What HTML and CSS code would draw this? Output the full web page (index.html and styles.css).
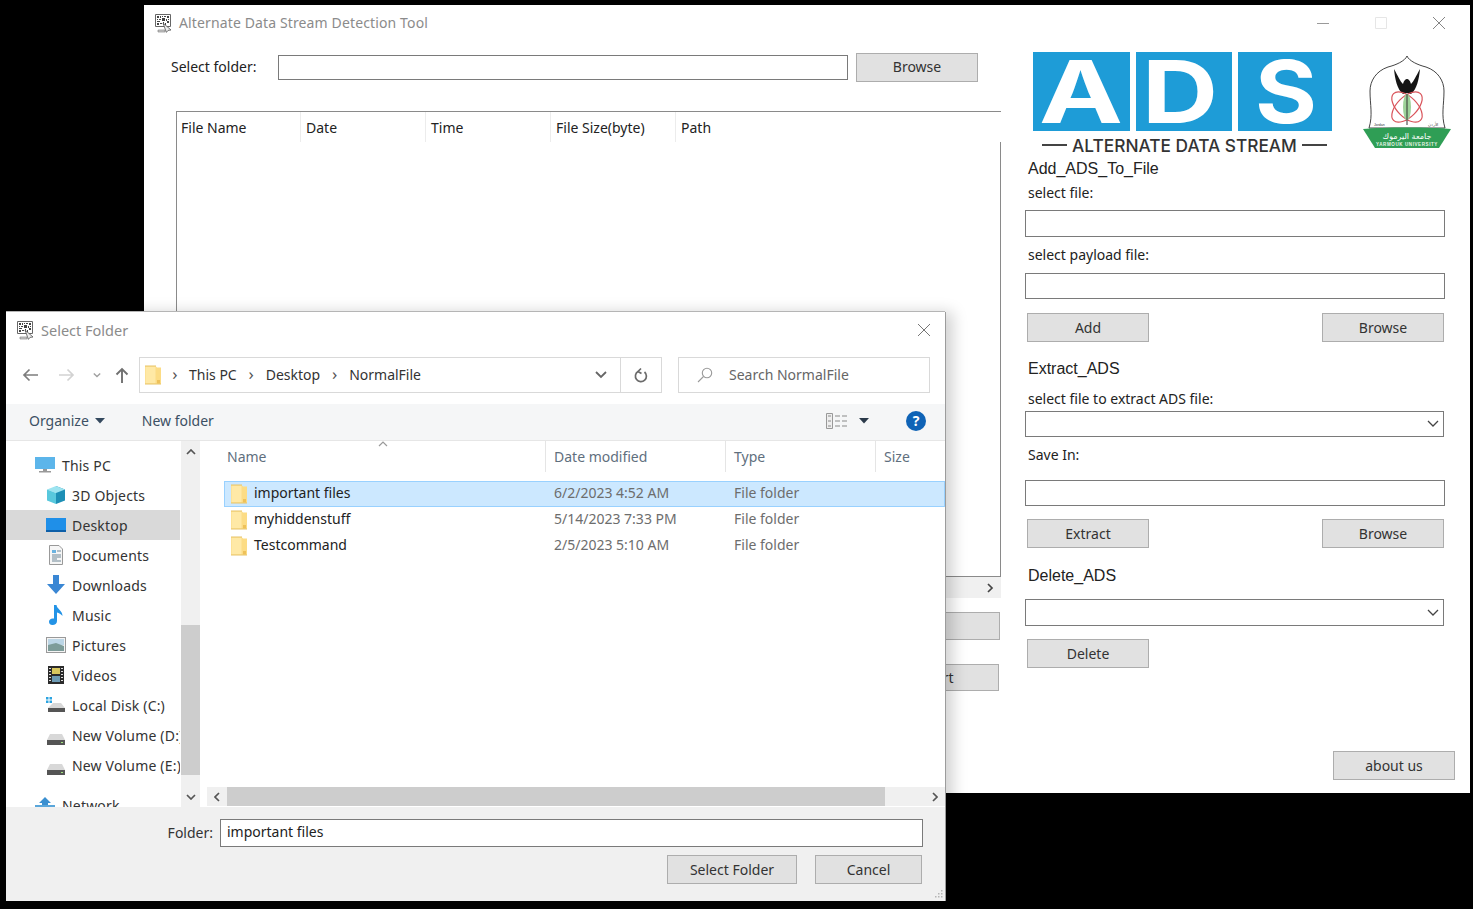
FILE: index.html
```html
<!DOCTYPE html>
<html lang="en">
<head>
<meta charset="utf-8">
<title>Alternate Data Stream Detection Tool</title>
<link rel="stylesheet" href="styles.css">
</head>
<body>
<svg class="defs" width="0" height="0">
  <defs>
    <symbol id="app" viewBox="0 0 20 20">
      <path d="M1.500 1.500h15v12h-15z" fill="#fff" stroke="#666" stroke-width="1"/>
      <path d="M3 3h2v2H3zM6 3h1v2H6zM8 3h1v1H8zM10 3h2v1h-2zM13 3h2v2h-2zM3 6h1v1H3zM5 6h2v1H5zM8 5h3v3H8zM12 6h1v2h-1zM14 6h1v1h-1zM3 8h3v1H3zM13 8h2v2h-2zM3 10h2v2H3zM6 10h2v1H6zM9 9h1v3H9zM11 10h1v2h-1z" fill="#444"/>
      <path d="M9 10l8 7-3 .4-1.600 2L9 10z" fill="#eee" stroke="#555" stroke-width=".8"/>
      <path d="M4 17h7v2H4z" fill="#ccc" stroke="#777" stroke-width=".6"/>
    </symbol>
    <symbol id="folder" viewBox="0 0 16 20">
      <path d="M0 1h10.500l1.500 1.500H16V19H0z" fill="#fcdc85"/>
      <path d="M.5 1.500h10v17H.5z" fill="#ffe9a6"/>
      <path d="M12 15h3v3.500h-3z" fill="#eec15a"/>
      <path d="M0 .5h11v1H0zM0 18.500h16v1H0z" fill="#e8c468"/>
    </symbol>
    <symbol id="drive" viewBox="0 0 20 14">
      <path d="M4 2h12l3 6H1z" fill="#d8d8d8"/>
      <path d="M1 8h18v5H1z" fill="#555"/>
      <path d="M15 10h2v1h-2z" fill="#9fe27a"/>
    </symbol>
  </defs>
</svg>

<main class="win-main">
  <header class="titlebar">
    <svg class="app-icon"><use href="#app"/></svg>
    <span class="title-text">Alternate Data Stream Detection Tool</span>
    <div class="win-buttons">
      <svg class="wb" viewBox="0 0 12 12"><path d="M0 6.500h12" stroke="#9a9a9a"/></svg>
      <svg class="wb" viewBox="0 0 12 12"><path d="M.5.500h11v11H.5z" fill="none" stroke="#e6e6e6"/></svg>
      <svg class="wb" viewBox="0 0 12 12"><path d="M0 0l12 12M12 0L0 12" stroke="#777" stroke-width=".9"/></svg>
    </div>
  </header>
  <div class="main-body">
    <section class="left-col">
      <div class="folder-row">
        <label class="ui folder-label">Select folder:</label>
        <div class="field folder-input"></div>
        <button class="btn folder-browse">Browse</button>
      </div>
      <div class="results">
        <div class="results-head">
          <span>File Name</span><span>Date</span><span>Time</span><span>File Size(byte)</span><span>Path</span>
        </div>
        <div class="results-body"></div>
      </div>
      <div class="results-scroll">
        <svg class="chev" viewBox="0 0 10 10"><path d="M3 1l4 4-4 4" fill="none" stroke="#444" stroke-width="1.700"/></svg>
      </div>
      <button class="btn left-btn first"></button>
      <button class="btn left-btn second">Export</button>
    </section>

    <section class="right-col">
      <div class="logos">
        <div class="ads-logo">
          <svg class="ads-tiles" viewBox="0 0 299 79">
            <rect width="97" height="79" fill="#1e9cd7"/>
            <rect x="103" width="96" height="79" fill="#1e9cd7"/>
            <rect x="205" width="94" height="79" fill="#1e9cd7"/>
            <g class="ads-letters">
              <text x="6" y="71" textLength="84" lengthAdjust="spacingAndGlyphs">A</text>
              <text x="109" y="71" textLength="76" lengthAdjust="spacingAndGlyphs">D</text>
              <text x="222" y="71" textLength="62" lengthAdjust="spacingAndGlyphs">S</text>
            </g>
          </svg>
          <div class="ads-caption"><i></i><span>ALTERNATE DATA STREAM</span><i></i></div>
        </div>
        <svg class="crest" viewBox="0 0 90 95">
          <path d="M45 1C43 6 34 10 26 12 14 16 8 26 8 36 8 50 11 60 7 73H83C79 60 82 50 82 36 82 26 76 16 64 12 56 10 47 6 45 1z" fill="#fff" stroke="#444" stroke-width="1"/>
          <path d="M32 14C33 24 35 34 41 39L45 38 49 39C55 34 57 24 58 14 54 21 52 26 49 29 48 25 46 24 45 24 44 24 42 25 41 29 38 26 36 21 32 14z" fill="#151515"/>
          <ellipse cx="45" cy="52" rx="19" ry="10" fill="none" stroke="#d9535a" stroke-width="1.200" transform="rotate(45 45 52)"/>
          <ellipse cx="45" cy="52" rx="19" ry="10" fill="none" stroke="#d9535a" stroke-width="1.200" transform="rotate(-45 45 52)"/>
          <ellipse cx="45" cy="52" rx="4" ry="13" fill="#9ed29a"/>
          <path d="M45 39v31" stroke="#333" stroke-width="1"/>
          <text class="crest-small" x="12" y="71">Jordan</text>
          <text class="crest-small" x="66" y="71">الأردن</text>
          <path d="M1 74C20 72 70 72 89 74L77 93H13z" fill="#2f9e55"/>
          <text class="crest-ar" x="45" y="84">جامعة اليرموك</text>
          <text class="crest-en" x="45" y="91">YARMOUK UNIVERSITY</text>
        </svg>
      </div>

      <h2 class="heading h-add">Add_ADS_To_File</h2>
      <label class="ui lbl l-file">select file:</label>
      <div class="field wide f-file"></div>
      <label class="ui lbl l-payload">select payload file:</label>
      <div class="field wide f-payload"></div>
      <div class="btn-row r-add"><button class="btn">Add</button><button class="btn">Browse</button></div>

      <h2 class="heading h-extract">Extract_ADS</h2>
      <label class="ui lbl l-extract">select file to extract ADS file:</label>
      <div class="field combo c-extract"><svg viewBox="0 0 12 8"><path d="M1 1l5 5 5-5" fill="none" stroke="#444" stroke-width="1.300"/></svg></div>
      <label class="ui lbl l-save">Save In:</label>
      <div class="field wide f-save"></div>
      <div class="btn-row r-extract"><button class="btn">Extract</button><button class="btn">Browse</button></div>

      <h2 class="heading h-delete">Delete_ADS</h2>
      <div class="field combo c-delete"><svg viewBox="0 0 12 8"><path d="M1 1l5 5 5-5" fill="none" stroke="#444" stroke-width="1.300"/></svg></div>
      <button class="btn b-delete">Delete</button>
      <button class="btn b-about">about us</button>
    </section>
  </div>
</main>

<div class="dialog">
  <header class="dlg-title">
    <svg class="app-icon"><use href="#app"/></svg>
    <span class="title-text small">Select Folder</span>
    <svg class="dlg-close" viewBox="0 0 12 12"><path d="M0 0l12 12M12 0L0 12" stroke="#666" stroke-width=".9"/></svg>
  </header>

  <div class="nav-row">
    <svg class="nav-ic back" viewBox="0 0 16 14"><path d="M16 7H2M7.500 1.500L2 7l5.500 5.500" fill="none" stroke="#7d7d7d" stroke-width="1.700"/></svg>
    <svg class="nav-ic fwd" viewBox="0 0 16 14"><path d="M0 7h14M8.500 1.500L14 7l-5.500 5.500" fill="none" stroke="#d2d2d2" stroke-width="1.700"/></svg>
    <svg class="nav-ic drop" viewBox="0 0 10 6"><path d="M1 1l4 4 4-4" fill="none" stroke="#a0a0a0" stroke-width="1.700"/></svg>
    <svg class="nav-ic up" viewBox="0 0 14 16"><path d="M7 16V2M1.500 7.500L7 2l5.500 5.500" fill="none" stroke="#707070" stroke-width="1.900"/></svg>
    <div class="crumbs">
      <svg class="crumb-folder"><use href="#folder"/></svg>
      <span class="sep first">›</span><span>This PC</span>
      <span class="sep">›</span><span>Desktop</span>
      <span class="sep">›</span><span>NormalFile</span>
      <svg class="crumb-drop" viewBox="0 0 12 8"><path d="M1 1l5 5 5-5" fill="none" stroke="#666" stroke-width="1.800"/></svg>
      <div class="crumb-refresh">
        <svg viewBox="0 0 14 16"><path d="M4 4.500A5.500 5.500 0 1 0 10.500 5M7 1.500L4 4.500l3.500 2" fill="none" stroke="#6a6a6a" stroke-width="1.700"/></svg>
      </div>
    </div>
    <div class="search">
      <svg viewBox="0 0 16 16"><circle cx="10" cy="6" r="4.700" fill="none" stroke="#9a9a9a" stroke-width="1.100"/><path d="M6.500 9.500L1 15" stroke="#9a9a9a" stroke-width="1.100"/></svg>
      <span>Search NormalFile</span>
    </div>
  </div>

  <div class="toolbar">
    <span class="tool">Organize</span>
    <svg class="caret" viewBox="0 0 10 6"><path d="M0 0h10L5 5.500z" fill="#34495e"/></svg>
    <span class="tool newf">New folder</span>
    <svg class="view-ic" viewBox="0 0 22 16">
      <path d="M.5.500h6v15h-6z" fill="#eee" stroke="#999"/>
      <path d="M2 3h3M2 8h3M2 13h3M9 3h5M16 3h5M9 8h5M16 8h5M9 13h5M16 13h5" stroke="#8a8a8a" stroke-width="1.200"/>
    </svg>
    <svg class="caret view-caret" viewBox="0 0 10 6"><path d="M0 0h10L5 5.500z" fill="#2b3a4a"/></svg>
    <span class="help">?</span>
  </div>

  <div class="panes">
    <nav class="nav-pane">
      <div class="nav-item top"><svg class="ni" viewBox="0 0 20 18"><rect x="0" y="1" width="20" height="12" fill="#5cb5ea"/><path d="M8 13h4v2H8zM4 15h12v1.500H4z" fill="#999"/></svg><span>This PC</span></div>
      <div class="nav-item"><svg class="ni" viewBox="0 0 20 20"><path d="M10 1l9 3.500v11L10 19z" fill="#1d8fb5"/><path d="M10 1L1 4.500 10 8l9-3.500z" fill="#9de4f0"/><path d="M1 4.500v11L10 19V8z" fill="#58c8dd"/></svg><span>3D Objects</span></div>
      <div class="nav-item active"><svg class="ni" viewBox="0 0 20 16"><rect x="0" y="1" width="20" height="14" fill="#1f8fe8"/><path d="M0 13h20v2H0z" fill="#0d5fa8"/></svg><span>Desktop</span></div>
      <div class="nav-item"><svg class="ni" viewBox="0 0 20 20"><path d="M3.500 .5H13l3.500 3.500v15.500h-13z" fill="#f6f6f6" stroke="#999"/><path d="M6 5h4v3H6z" fill="#6bb3e0"/><path d="M11 6h4M6 10h9M6 12h9M6 14h5M6 16h9" stroke="#6e8796"/></svg><span>Documents</span></div>
      <div class="nav-item"><svg class="ni" viewBox="0 0 20 20"><path d="M7 0h6v9h6l-9 10L1 9h6z" fill="#3a87d4"/></svg><span>Downloads</span></div>
      <div class="nav-item"><svg class="ni" viewBox="0 0 20 20"><path d="M8 0h2.500c.5 4 6 5.500 6 11-1.500-2-3.500-3-5.500-3.500V16c0 2.500-2 4-4.500 4S3 18.500 3 16.500 5 13 8 13.500z" fill="#2393e6"/></svg><span>Music</span></div>
      <div class="nav-item"><svg class="ni" viewBox="0 0 20 16"><rect x=".5" y=".5" width="19" height="15" fill="#f4f4f4" stroke="#999"/><rect x="2" y="2" width="16" height="6" fill="#bcd6e6"/><path d="M2 8l8-2 8 3v5H2z" fill="#7d9c99"/></svg><span>Pictures</span></div>
      <div class="nav-item"><svg class="ni" viewBox="0 0 20 20"><rect x="2" y="1" width="16" height="18" fill="#2b2b2b"/><rect x="6" y="3" width="8" height="6" fill="#d8c75e"/><rect x="6" y="11" width="8" height="6" fill="#6c9bb5"/><path d="M3 3h2v1H3zM3 6h2v1H3zM3 9h2v1H3zM3 12h2v1H3zM3 15h2v1H3zM15 3h2v1h-2zM15 6h2v1h-2zM15 9h2v1h-2zM15 12h2v1h-2zM15 15h2v1h-2z" fill="#ddd"/></svg><span>Videos</span></div>
      <div class="nav-item"><svg class="ni" viewBox="0 0 20 18"><path d="M0 1h2.500v2.500H0zM3.500 1H6v2.500H3.500zM0 4.500h2.500V7H0zM3.500 4.500H6V7H3.500z" fill="#2ba3e0"/><path d="M7 7h8l4 5H2z" fill="#d8d8d8"/><path d="M2 12h17v4H2z" fill="#555"/></svg><span>Local Disk (C:)</span></div>
      <div class="nav-item"><svg class="ni drive"><use href="#drive"/></svg><span>New Volume (D:)</span></div>
      <div class="nav-item"><svg class="ni drive"><use href="#drive"/></svg><span>New Volume (E:)</span></div>
      <div class="nav-item top net"><svg class="ni" viewBox="0 0 20 18"><path d="M10 1l6 6h-3v3H7V7H4z" fill="#3a8fd0"/><path d="M0 9h20v7H0z" fill="#5aa6da"/></svg><span>Network</span></div>
    </nav>
    <div class="nav-scroll">
      <svg class="sb-ic" viewBox="0 0 10 6"><path d="M1 5l4-4 4 4" fill="none" stroke="#555" stroke-width="1.700"/></svg>
      <div class="nav-thumb"></div>
      <svg class="sb-ic" viewBox="0 0 10 6"><path d="M1 1l4 4 4-4" fill="none" stroke="#555" stroke-width="1.700"/></svg>
    </div>
    <div class="file-pane">
      <div class="file-head">
        <span class="col-name">Name</span><span>Date modified</span><span>Type</span><span>Size</span>
        <svg class="sort" viewBox="0 0 10 6"><path d="M1 5l4-4 4 4" fill="none" stroke="#9a9a9a" stroke-width="1.200"/></svg>
      </div>
      <div class="file-rows">
        <div class="file-row selected"><span class="fname"><svg class="fic"><use href="#folder"/></svg><b>important files</b></span><span class="muted">6/2/2023 4:52 AM</span><span class="muted">File folder</span></div>
        <div class="file-row"><span class="fname"><svg class="fic"><use href="#folder"/></svg><b>myhiddenstuff</b></span><span class="muted">5/14/2023 7:33 PM</span><span class="muted">File folder</span></div>
        <div class="file-row"><span class="fname"><svg class="fic"><use href="#folder"/></svg><b>Testcommand</b></span><span class="muted">2/5/2023 5:10 AM</span><span class="muted">File folder</span></div>
      </div>
      <div class="h-scroll">
        <svg class="hs-ic" viewBox="0 0 6 10"><path d="M5 1L1 5l4 4" fill="none" stroke="#555" stroke-width="1.700"/></svg>
        <div class="h-thumb"></div>
        <svg class="hs-ic" viewBox="0 0 6 10"><path d="M1 1l4 4-4 4" fill="none" stroke="#555" stroke-width="1.700"/></svg>
      </div>
    </div>
  </div>

  <footer class="dlg-foot">
    <div class="foot-row">
      <label class="foot-label">Folder:</label>
      <div class="field foot-input">important files</div>
    </div>
    <div class="foot-btns">
      <button class="btn dlg-btn select">Select Folder</button>
      <button class="btn dlg-btn cancel">Cancel</button>
    </div>
    <svg class="grip" viewBox="0 0 10 10"><path d="M8 1h1.500v1.500H8zM5 4h1.500v1.500H5zM8 4h1.500v1.500H8zM2 7h1.500v1.500H2zM5 7h1.500v1.500H5zM8 7h1.500v1.500H8z" fill="#b5b5b5"/></svg>
  </footer>
</div>
</body>
</html>
```

FILE: styles.css
```css
* { box-sizing: border-box; }
html, body { margin: 0; height: 100%; }
body {
  position: relative;
  width: 1473px;
  height: 909px;
  overflow: hidden;
  background: #000;
  font-family: "Noto Sans", "Open Sans", sans-serif;
  font-size: 14px;
  color: #222;
}
.defs { position: absolute; }
button { font: inherit; color: inherit; padding: 0 0 1px; }
svg { display: block; flex: none; }

/* Windows on the desktop */
.win-main {
  position: absolute;
  left: 144px;
  top: 5px;
  width: 1326px;
  height: 788px;
  background: #fff;
  display: flex;
  flex-direction: column;
}
.dialog {
  position: absolute;
  left: 6px;
  top: 312px;
  width: 939px;
  height: 589px;
  background: #fff;
  display: flex;
  flex-direction: column;
  box-shadow: 1px 0 0 #9c9c9c, 0 -1px 0 #b5b5b5, 8px 0 14px rgba(0,0,0,.18);
}

.titlebar { height: 38px; padding-bottom: 2px; display: flex; align-items: center; flex: none; }
.app-icon { width: 20px; height: 20px; margin-left: 10px; }
.title-text { margin-left: 5px; padding-bottom: 1px; font-size: 14px; color: #8b8b8b; letter-spacing: .13px; }
.win-buttons { margin-left: auto; margin-right: 25px; display: flex; gap: 46px; }
.wb { width: 12px; height: 12px; }

.main-body { display: flex; flex: 1; min-height: 0; }
.left-col { width: 866px; padding-left: 27px; flex: none; }
.right-col { margin-left: 15px; width: 430px; display: flex; flex-direction: column; align-items: flex-start; }

.ui { font-size: 14px; color: #222; }
.field { background: #fff; border: 1px solid #7a7a7a; }
.btn { background: #e1e1e1; border: 1px solid #adadad; color: #333; font-size: 14px; height: 29px; width: 122px; }

/* Left column */
.folder-row { display: flex; align-items: center; height: 28px; margin-top: 10px; }
.folder-label { width: 107px; padding-bottom: 1px; }
.folder-input { width: 570px; height: 25px; }
.folder-browse { width: 122px; height: 29px; margin-left: 8px; }

.results { margin: 30px 0 0 5px; width: 825px; height: 466px; display: flex; flex-direction: column; }
.results-head { display: grid; grid-template-columns: 124px repeat(3, 125px) 1fr; height: 31px; border-top: 1px solid #8a8a8a; border-left: 1px solid #8a8a8a; }
.results-head span { padding-left: 5px; display: flex; align-items: center; border-right: 1px solid #ececec; color: #222; height: 30px; }
.results-head span:first-child { padding-left: 4px; }
.results-head span:last-child { border-right: 0; }
.results-body { flex: 1; border: 1px solid #8a8a8a; border-top: 0; }
.results-scroll { margin-left: 5px; width: 825px; height: 21px; background: #f0f0f0; display: flex; align-items: center; justify-content: flex-end; padding-right: 6px; }
.chev { width: 10px; height: 10px; }
.left-btn { display: block; margin-left: 694px; width: 135px; }
.left-btn.first { margin-top: 14px; height: 28px; width: 135px; }
.left-btn.second { margin-top: 24px; height: 27px; width: 134px; }

/* Right column */
.logos { display: flex; margin-top: 9px; height: 105px; padding-left: 8px; }
.ads-logo { width: 299px; }
.ads-tiles { width: 299px; height: 79px; overflow: visible; }
.ads-letters text { font-family: Inter, "Liberation Sans", sans-serif; font-weight: 700; font-size: 86px; fill: #fff; }
.ads-caption { display: flex; align-items: center; justify-content: space-between; padding: 0 5px 0 9px; height: 28px; font-family: Inter, "Liberation Sans", sans-serif; font-weight: 500; font-size: 17.300px; color: #333; white-space: nowrap; }
.ads-caption i { width: 25px; height: 2px; background: #444; }
.crest { width: 90px; height: 95px; margin: 3px 0 0 30px; }
.crest-small { font-family: "Liberation Sans", sans-serif; font-size: 3.500px; fill: #333; }
.crest-ar { font-family: "DejaVu Sans", sans-serif; font-size: 8px; fill: #fff; text-anchor: middle; }
.crest-en { font-family: "Liberation Sans", sans-serif; font-weight: 700; font-size: 4.500px; letter-spacing: .6px; fill: #e8f5e8; text-anchor: middle; }

.heading { margin: 0; padding: 1px 0 0 3px; font-family: "Liberation Sans", sans-serif; font-weight: 400; font-size: 16px; line-height: 20px; height: 20px; color: #222; }
.lbl { display: block; padding-left: 3px; line-height: 18px; height: 18px; }
.wide { width: 420px; }
.combo { width: 419px; height: 26px; display: flex; align-items: center; justify-content: flex-end; padding-right: 4px; }
.combo svg { width: 12px; height: 8px; }
.btn-row { display: flex; justify-content: space-between; width: 417px; margin-left: 2px; }

.h-add { margin-top: 1px; }
.l-file { margin-top: 6px; }
.f-file { height: 27px; margin-top: 8px; }
.l-payload { margin-top: 9px; }
.f-payload { height: 26px; margin-top: 9px; }
.r-add { margin-top: 14px; }
.h-extract { margin-top: 16px; }
.l-extract { margin-top: 12px; }
.c-extract { margin-top: 3px; }
.l-save { margin-top: 9px; }
.f-save { height: 26px; margin-top: 16px; }
.r-extract { margin-top: 13px; }
.h-delete { margin-top: 17px; }
.c-delete { height: 27px; margin-top: 14px; }
.b-delete { margin: 13px 0 0 2px; }
.b-about { margin: 83px 0 0 308px; }

/* Dialog */
.dlg-title { height: 38px; padding-bottom: 2px; display: flex; align-items: center; flex: none; }
.title-text.small { margin-left: 5px; font-size: 14.500px; letter-spacing: 0; }
.dlg-close { width: 12px; height: 12px; margin-left: auto; margin-right: 15px; }

.nav-row { height: 36px; margin-top: 7px; display: flex; align-items: center; flex: none; }
.nav-ic.back { width: 16px; height: 14px; margin-left: 16px; }
.nav-ic.fwd { width: 16px; height: 14px; margin-left: 21px; }
.nav-ic.drop { width: 8px; height: 6px; margin-left: 18px; }
.nav-ic.up { width: 14px; height: 16px; margin-left: 14px; }
.crumbs { margin-left: 10px; width: 523px; height: 36px; border: 1px solid #d9d9d9; display: flex; align-items: center; color: #333; }
.crumbs > span { margin-bottom: 2px; }
.crumb-folder { width: 16px; height: 20px; margin-left: 5px; }
.crumbs > .sep { color: #555; font-size: 17px; width: 29px; text-align: center; line-height: 1; margin-bottom: 3px; }
.crumbs > .sep.first { width: 28px; }
.crumb-drop { width: 12px; height: 8px; margin-left: auto; margin-right: 13px; }
.crumb-refresh { width: 41px; height: 34px; border-left: 1px solid #d9d9d9; display: flex; align-items: center; justify-content: center; }
.crumb-refresh svg { width: 14px; height: 16px; }
.search { margin-left: 16px; width: 252px; height: 36px; border: 1px solid #d9d9d9; display: flex; align-items: center; color: #666; }
.search svg { width: 16px; height: 16px; margin-left: 18px; margin-right: 16px; }
.search span { margin-bottom: 2px; }

.toolbar { height: 37px; margin-top: 11px; padding-bottom: 3px; background: #f5f6f7; border-bottom: 1px solid #e6e6e6; display: flex; align-items: center; flex: none; color: #3c5064; }
.tool { margin-left: 23px; }
.caret { width: 10px; height: 6px; margin-left: 6px; }
.tool.newf { margin-left: 37px; }
.view-ic { width: 22px; height: 16px; margin-left: auto; }
.view-caret { margin-left: 11px; }
.help { width: 20px; height: 20px; border-radius: 50%; background: #0f63b6; color: #fff; font-weight: 700; font-size: 14px; line-height: 20px; text-align: center; margin: 0 19px 0 37px; }

.panes { height: 366px; display: flex; flex: none; }
.nav-pane { width: 174px; padding-top: 9px; overflow: hidden; flex: none; letter-spacing: .18px; }
.nav-item { height: 30px; display: flex; align-items: center; white-space: nowrap; color: #333; padding-left: 40px; }
.nav-item.top { padding-left: 29px; }
.nav-item.top .ni { margin-right: 7px; }
.nav-item.net { margin-top: 10px; }
.nav-item.active { background: #d9d9d9; }
.ni { width: 20px; height: 20px; margin-right: 6px; flex: none; }
.ni.drive { width: 20px; height: 14px; margin-top: 8px; }
.nav-scroll { margin-left: 1px; width: 19px; background: #f0f0f0; display: flex; flex-direction: column; align-items: center; }
.sb-ic { width: 10px; height: 6px; margin-top: 8px; }
.nav-thumb { width: 19px; height: 150px; background: #cdcdcd; margin-top: 170px; }
.nav-scroll .sb-ic:last-child { margin-top: 19px; }

.file-pane { margin-left: 7px; width: 738px; display: flex; flex-direction: column; }
.file-head { position: relative; height: 33px; padding-bottom: 2px; display: grid; grid-template-columns: 338px 180px 150px 1fr; color: #5f6f7e; flex: none; }
.file-head span { padding-left: 8px; display: flex; align-items: center; border-left: 1px solid #e5e5e5; }
.file-head .col-name { padding-left: 20px; border-left: 0; }
.sort { position: absolute; left: 171px; top: 0; width: 10px; height: 6px; }
.file-rows { flex: 1; padding: 7px 0 0 17px; }
.file-row { display: grid; grid-template-columns: 321px 180px 150px; height: 26px; align-items: center; border: 1px solid transparent; }
.file-row > span { padding-left: 8px; margin-bottom: 3px; }
.file-row > .fname { display: flex; align-items: center; padding-left: 6px; color: #222; margin-bottom: 0; }
.fname b { font-weight: 400; margin-bottom: 3px; }
.fic { width: 16px; height: 20px; margin-right: 7px; }
.muted { color: #6d6d6d; }
.file-row.selected { background: #cce8ff; border-color: #99d1ff; }
.h-scroll { height: 19px; margin-bottom: 1px; background: #f0f0f0; display: flex; align-items: center; flex: none; }
.hs-ic { width: 6px; height: 10px; margin: 0 7px; }
.h-thumb { width: 658px; height: 19px; background: #cdcdcd; margin-right: 40px; }

.dlg-foot { flex: 1; background: #f0f0f0; position: relative; padding: 12px 0 0 0; }
.foot-row { display: flex; align-items: center; height: 28px; }
.foot-label { width: 207px; padding-bottom: 2px; text-align: right; color: #333; }
.foot-input { margin-left: 7px; width: 703px; height: 28px; line-height: 23px; padding-left: 6px; color: #222; }
.foot-btns { display: flex; margin: 8px 0 0 661px; gap: 18px; }
.dlg-btn.select { width: 130px; }
.dlg-btn.cancel { width: 107px; }
.grip { position: absolute; right: 2px; bottom: 2px; width: 10px; height: 10px; }
```
